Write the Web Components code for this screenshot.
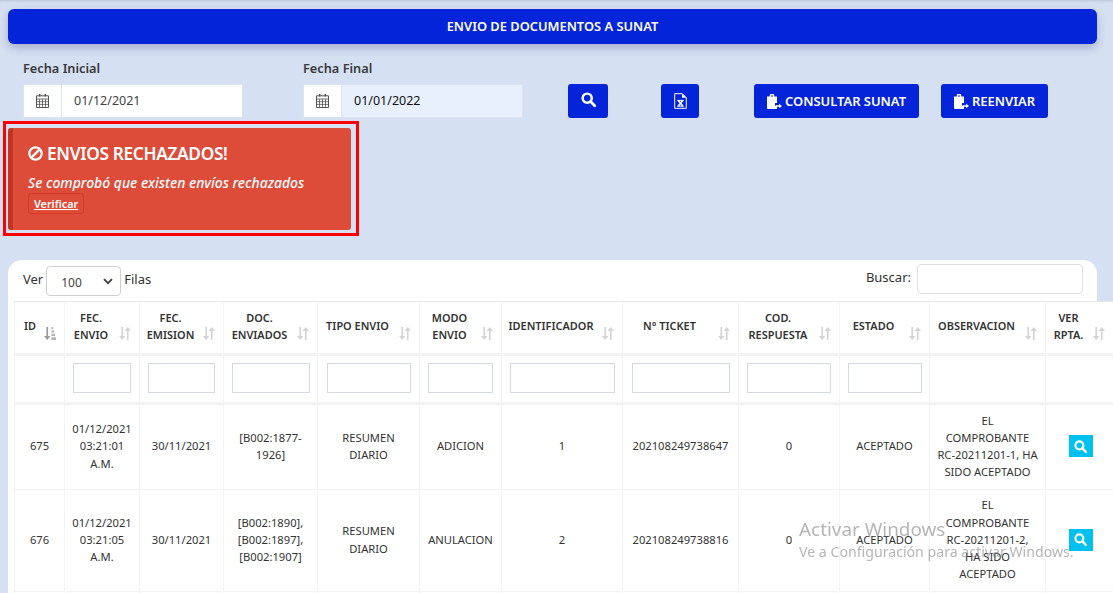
<!DOCTYPE html>
<html lang="es"><head><meta charset="utf-8"><title>Envio de documentos</title>
<style>
html,body{margin:0;height:593px;overflow:hidden}
body{background:#d5e0f3;font-family:"Noto Sans",sans-serif;color:#333;box-shadow:inset 0 3px 3px -2px rgba(0,0,40,.12)}
</style></head><body>
<envio-page></envio-page>
<win-mark></win-mark>
<script>
const I={
search:(s,c='#fff')=>`<svg width="${s}" height="${s}" viewBox="0 0 16 16" style="display:block"><circle cx="6.6" cy="6.6" r="4.9" fill="none" stroke="${c}" stroke-width="2.6"/><path d="M10.4 10.4 14.6 14.6" stroke="${c}" stroke-width="3" stroke-linecap="round"/></svg>`,
cal:`<svg width="13" height="14" viewBox="0 0 13 14" style="display:block"><path fill="#444" d="M3 0h1.4v2.6H3zM8.6 0H10v2.6H8.6z"/><path fill="none" stroke="#555" d="M.5 1.8h12v11.7H.5z"/><path fill="none" stroke="#555" stroke-width=".8" d="M.5 5h12M.5 7.7h12M.5 10.4h12M3.5 5v8.5M6.5 5v8.5M9.5 5v8.5"/></svg>`,
excel:`<svg width="13" height="16" viewBox="0 0 13 16" style="display:block"><path fill="none" stroke="#fff" d="M.7.7h7.6l4 4v10.6H.7z"/><path fill="#fff" d="M8 .7v4h4.2z"/><path stroke="#fff" stroke-width="1.5" d="M4.2 7.6 8.8 13M8.8 7.6 4.2 13"/><path stroke="#fff" d="M3.2 7.4h6.6M3.2 13.2h6.6"/></svg>`,
clip:`<svg width="15" height="15" viewBox="0 0 15 15" style="display:block;flex:none"><path fill="#fff" fill-rule="evenodd" d="M0 2.4h2.8V1.2A1.2 1.2 0 0 1 4 0h2a1.2 1.2 0 0 1 1.2 1.2v1.2H10V9H8v2.8h2V15H1a1 1 0 0 1-1-1zM4.3 1.2v1.6h1.4V1.2z"/><path stroke="#fff" stroke-width="1.5" d="M8.8 12h3.6"/><path fill="#fff" d="M12 9.7 15 12l-3 2.3z"/></svg>`,
ban:`<svg width="15" height="15" viewBox="0 0 15 15" style="display:block;flex:none"><circle cx="7.5" cy="7.5" r="6.2" fill="none" stroke="#fff" stroke-width="2.2"/><path d="M3.4 11.6 11.6 3.4" stroke="#fff" stroke-width="2.2"/></svg>`,
sort:`<svg width="12" height="13" viewBox="0 0 12 13" style="display:block"><path fill="#d4d4d4" d="M2.4 0h1.7v9h2.3L3.2 13 0 9h2.4zM7.9 13h1.7V4H12L8.8 0 5.6 4h2.3z"/></svg>`,
sortOn:`<svg width="12" height="13" viewBox="0 0 12 13" style="display:block"><path fill="#9a9a9a" d="M2.4 0h1.7v9h2.3L3.2 13 0 9h2.4z"/><path fill="#b5b5b5" d="M7.4 0h1.8v2.2H7.4zM7.4 3.4h2.8v2.2H7.4zM7.4 6.8h3.6V9H7.4zM7.4 10.2H12V13H7.4z"/></svg>`
};
const F='"Noto Sans",sans-serif';
function def(n,html,init){customElements.define(n,class extends HTMLElement{constructor(){super();this.attachShadow({mode:'open'}).innerHTML=typeof html==='function'?html(this):html}connectedCallback(){init&&init(this)}})}

def('title-bar',`<style>:host{display:block;height:35px;background:#0324d9;border-radius:6px;box-shadow:0 4px 8px rgba(30,40,90,.25);color:#fff;font:600 12.85px/35px ${F};text-align:center}</style><slot></slot>`);

def('date-field',el=>`<style>:host{display:block;width:220px}
label{display:block;font:600 12.75px/17px ${F};color:#3a3a3a;height:17px;margin-bottom:7px}
.g{display:flex;height:34px;box-sizing:border-box;border:1px solid #dde3ee;background:#fff}
.a{width:37px;display:flex;align-items:center;justify-content:center;border-right:1px solid #dde3ee;background:#fff}
.v{flex:1;padding-left:12px;font:12.5px/32px ${F};color:${el.getAttribute('filled')!=null?'#111':'#444'};background:${el.getAttribute('filled')!=null?'#e8f0fe':'#fff'}}
</style><label>${el.getAttribute('label')}</label><div class="g"><div class="a">${I.cal}</div><div class="v">${el.getAttribute('value')}</div></div>`);

def('blue-btn',el=>`<style>:host{display:flex;align-items:center;justify-content:center;gap:3px;height:34px;box-sizing:border-box;background:#0324d9;border-radius:3px;color:#fff;font:600 12.95px/33px ${F};width:${el.getAttribute('w')}px;flex:none}</style><slot></slot>`);

def('alert-box',`<style>:host{display:block;box-sizing:border-box;width:356px;height:115px;border:3px solid #f00;padding:4px 5px 3px 2px}
.b{height:102px;box-sizing:border-box;background:#dd4b39;border-left:5px solid #c23321;border-radius:3px;color:#fff;padding:15px 15px 0 15px}
h4{margin:0;display:flex;align-items:center;gap:4px;font:600 17.3px/21px ${F};height:21px;letter-spacing:-.35px}
p{margin:10px 0 0;font:italic 500 13.95px/17px ${F}}
a{display:inline-block;box-sizing:border-box;height:21px;margin-top:2px;padding:0 5px;border:1px solid #d73925;border-radius:3px;background:#dd4b39;font:600 10.8px/19px ${F};color:#fff;text-decoration:underline}
</style><div class="b"><h4>${I.ban}<span>ENVIOS RECHAZADOS!</span></h4><p>Se comprobó que existen envíos rechazados</p><a>Verificar</a></div>`);

const cols=[50,75,84,94,102,82,121,116,101,90,116,68];
const heads=[['ID'],['FEC.','ENVIO'],['FEC.','EMISION'],['DOC.','ENVIADOS'],['TIPO ENVIO'],['MODO','ENVIO'],['IDENTIFICADOR'],['N° TICKET'],['COD.','RESPUESTA'],['ESTADO'],['OBSERVACION'],['VER','RPTA.']];
const filt=[0,58,67,78,84,65,105,98,84,74,0,0];
const rows=[
['675',['01/12/2021','03:21:01','A.M.'],'30/11/2021',['[B002:1877-','1926]'],['RESUMEN','DIARIO'],'ADICION','1','202108249738647','0','ACEPTADO',['EL','COMPROBANTE','RC-20211201-1, HA','SIDO ACEPTADO']],
['676',['01/12/2021','03:21:05','A.M.'],'30/11/2021',['[B002:1890],','[B002:1897],','[B002:1907]'],['RESUMEN','DIARIO'],'ANULACION','2','202108249738816','0','ACEPTADO',['EL','COMPROBANTE','RC-20211201-2,','HA SIDO','ACEPTADO']]];
const L=v=>Array.isArray(v)?v.join('<br>'):v;

def('docs-table',`<style>:host{display:block;width:1099px}
table{border-collapse:collapse;table-layout:fixed;width:1099px;background:#fff;font:11.2px/17.2px ${F};color:#333}
th,td{border:1px solid #f2f2f2;text-align:center;vertical-align:middle;padding:0;box-sizing:border-box}
tr.r1 td,tr.r2 td{padding-bottom:2px}
thead th{height:53px;border-top:1px solid #e8e8e8;font:600 10.95px/17px ${F};color:#333;position:relative;border-bottom:3px solid #f3f3f3;padding:0 22px 4px 0}
th.first{text-align:left;padding-left:9px}
th svg{position:absolute;right:8px;bottom:13px}
tr.f td{height:49px;border-bottom:3px solid #f3f3f3}
tr.f input{display:block;margin:-1px auto 1px;box-sizing:border-box;height:30px;border:1px solid #d5d9e3;background:#fff;padding:0}
tr.r1 td{height:86px}tr.r2 td{height:102px}
.v{display:flex;width:24px;height:22px;margin:0 auto;background:#00c0ef;align-items:center;justify-content:center;position:relative;left:1px}
</style><table><colgroup>${cols.map(w=>`<col style="width:${w}px">`).join('')}</colgroup>
<thead><tr>${heads.map((h,i)=>`<th class="${i==0?'first':''}">${h.join('<br>')}${i==0?I.sortOn:I.sort}</th>`).join('')}</tr></thead>
<tbody><tr class="f">${filt.map(w=>`<td>${w?`<input aria-label="filtro" style="width:${w}px">`:''}</td>`).join('')}</tr>
${rows.map((r,i)=>`<tr class="r${i+1}">${r.map(c=>`<td>${L(c)}</td>`).join('')}<td><span class="v">${I.search(13)}</span></td></tr>`).join('')}
<tr>${cols.map(()=>'<td style="height:20px"></td>').join('')}</tr></tbody></table>`);

def('data-card',`<style>:host{display:block;width:1089px;height:340px;background:#fff;border-radius:14px 14px 0 0;box-sizing:border-box;padding:0 0 0 6px}
.t{display:flex;justify-content:space-between;height:41px;font:13px/17px ${F};color:#333}
.l{display:flex;align-items:flex-start;padding:6px 0 0 9px;gap:3px}.l span{line-height:26px}
.sel{box-sizing:border-box;width:75px;height:30px;border:1px solid #cfcfcf;border-radius:4px;font:12px/30px ${F};padding:3px 7px 0 14px;display:flex;align-items:center;justify-content:space-between;color:#444}
.sel svg{margin-top:-3px}
.r{display:flex;align-items:flex-start;padding:4px 14px 0 0;gap:6px}.r span{line-height:27px}
.inp{width:166px;height:30px;box-sizing:border-box;border:1px solid #dfdfdf;border-radius:4px}
</style><div class="t"><div class="l"><span>Ver</span><div class="sel">100<svg width="10" height="7" viewBox="0 0 10 7"><path d="M1 1.2 5 5.2 9 1.2" fill="none" stroke="#444" stroke-width="1.9"/></svg></div><span>Filas</span></div>
<div class="r"><span>Buscar:</span><div class="inp"></div></div></div><docs-table></docs-table>`);

def('win-mark',`<style>:host{position:fixed;left:799px;top:517px;color:rgba(120,120,120,.55);font:14.15px/18px "Noto Sans",sans-serif;white-space:nowrap;pointer-events:none}
div{font-size:18.9px;line-height:25px;margin-bottom:1px}</style><div>Activar Windows</div>Ve a Configuración para activar Windows.`);

def('envio-page',`<style>:host{display:block;padding:9px 0 0 8px}
title-bar{width:1089px}
.f{display:flex;margin:16px 0 0 15px;height:66px;align-items:flex-start}
.f date-field{margin-right:60px}
.bs{display:flex;margin:24px 0 0 -15px}
.up{display:block;margin-top:-3px}
data-card{margin-top:24px}
alert-box{margin-left:-5px;margin-top:-5px}
</style><title-bar>ENVIO DE DOCUMENTOS A SUNAT</title-bar>
<div class="f"><date-field label="Fecha Inicial" value="01/12/2021"></date-field><date-field label="Fecha Final" value="01/01/2022" filled></date-field>
<div class="bs"><blue-btn w="40"><span class="up">${I.search(15)}</span></blue-btn><blue-btn w="38" style="margin-left:53px">${I.excel}</blue-btn><blue-btn w="165" style="margin-left:55px">${I.clip}CONSULTAR SUNAT</blue-btn><blue-btn w="107" style="margin-left:22px">${I.clip}REENVIAR</blue-btn></div></div>
<alert-box></alert-box><data-card></data-card>`);
</script></body></html>
